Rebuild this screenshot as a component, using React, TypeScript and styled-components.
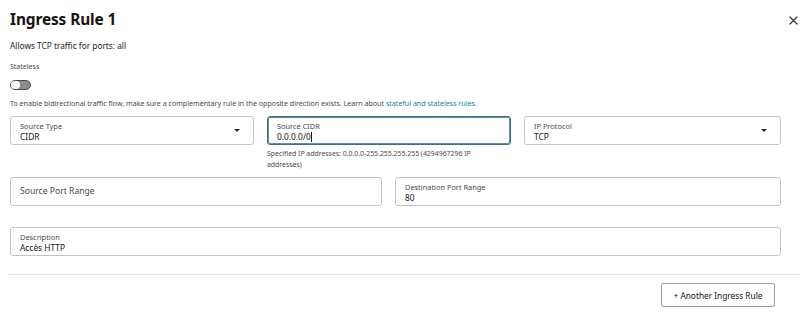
import React from "react";
import styled, { createGlobalStyle } from "styled-components";

const GlobalStyle = createGlobalStyle`
  html, body {
    margin: 0;
    padding: 0;
    background: #ffffff;
    overflow: hidden;
  }
  body {
    font-family: "Noto Sans", "Open Sans", Arial, sans-serif;
    color: #161513;
  }
`;

const Panel = styled.div`
  width: 800px;
  height: 318px;
  box-sizing: border-box;
  display: flex;
  flex-direction: column;
`;

const Body = styled.div`
  padding: 0 19px 0 10px;
  display: flex;
  flex-direction: column;
`;

const Header = styled.div`
  display: flex;
  justify-content: space-between;
  align-items: center;
  height: 22px;
  margin-top: 9px;
`;

const Title = styled.h2`
  margin: 0;
  font-size: 15.4px;
  line-height: 22px;
  font-weight: 700;
  letter-spacing: -0.1px;
`;

const CloseButton = styled.button`
  border: none;
  background: none;
  padding: 0;
  width: 10px;
  height: 10px;
  margin-right: -17px;
  display: flex;
  align-items: center;
  justify-content: center;
  cursor: pointer;
`;

const Summary = styled.p`
  margin: 9px 0 0;
  font-size: 8.3px;
  line-height: 12px;
  color: #252525;
`;

const SmallLabel = styled.div`
  margin-top: 10px;
  font-size: 7px;
  line-height: 10px;
  color: #4a4a4a;
`;

const Toggle = styled.div<{ $on?: boolean }>`
  margin-top: 8px;
  width: 19px;
  height: 8px;
  border: 1px solid #4b4b4b;
  border-radius: 5px;
  background: ${(p) => (p.$on ? "#227e9e" : "#8c8c8c")};
  position: relative;
  &::after {
    content: "";
    position: absolute;
    top: 0;
    left: ${(p) => (p.$on ? "10px" : "0")};
    width: 9px;
    height: 8px;
    border-radius: 4px;
    background: #ffffff;
  }
`;

const Hint = styled.p`
  margin: 8px 0 0;
  font-size: 7.1px;
  line-height: 11px;
  color: #4a4a4a;
`;

const Link = styled.a`
  color: #227e9e;
  text-decoration: none;
`;

const Grid = styled.div<{ $cols: string; $top: number }>`
  display: grid;
  grid-template-columns: ${(p) => p.$cols};
  column-gap: 13px;
  margin-top: ${(p) => p.$top}px;
  align-items: start;
`;

const FieldWrap = styled.div`
  display: flex;
  flex-direction: column;
`;

const Field = styled.div<{ $focused?: boolean }>`
  position: relative;
  height: 29px;
  box-sizing: border-box;
  border: 1px solid ${(p) => (p.$focused ? "#3e6f84" : "#c4c4c4")};
  box-shadow: ${(p) => (p.$focused ? "inset 0 0 0 1px #5f8fa3" : "none")};
  border-radius: 3px;
  padding: 4px 9px 0;
  display: flex;
  flex-direction: column;
`;

const FieldLabel = styled.span`
  font-size: 7.4px;
  line-height: 10px;
  color: #4a4a4a;
`;

const FieldValue = styled.span`
  font-size: 8.4px;
  line-height: 11px;
  color: #161513;
  display: flex;
  align-items: center;
`;

const Placeholder = styled.span`
  font-size: 8.6px;
  line-height: 27px;
  margin-top: -4px;
  color: #4a4a4a;
`;

const Cursor = styled.span`
  display: inline-block;
  width: 1px;
  height: 10px;
  background: #161513;
`;

const Caret = styled.span`
  position: absolute;
  right: 13px;
  top: 12px;
  width: 0;
  height: 0;
  border-left: 3px solid transparent;
  border-right: 3px solid transparent;
  border-top: 3px solid #2b2b2b;
`;

const FieldHelp = styled.p`
  margin: 3px 0 0;
  font-size: 6.9px;
  line-height: 11px;
  color: #4a4a4a;
`;

const Divider = styled.hr`
  margin: 18px 0 0 8px;
  border: none;
  border-top: 1px solid #e2e2e2;
  width: 792px;
`;

const Footer = styled.div`
  display: flex;
  justify-content: flex-end;
  padding-right: 25px;
  margin-top: 8px;
`;

const SecondaryButton = styled.button`
  height: 24px;
  width: 114px;
  box-sizing: border-box;
  border: 1px solid #9e9e9e;
  border-radius: 2px;
  background: #ffffff;
  font-family: "Noto Sans", "Open Sans", Arial, sans-serif;
  font-size: 8.3px;
  color: #161513;
  padding: 0;
  cursor: pointer;
`;

const CloseIcon = () => (
  <svg width="9" height="9" viewBox="0 0 9 9">
    <path d="M1 1 L8 8 M8 1 L1 8" stroke="#3a3a3a" strokeWidth="1.3" strokeLinecap="round" />
  </svg>
);

export default function App() {
  return (
    <Panel>
      <GlobalStyle />
      <Body>
        <Header>
          <Title>Ingress Rule 1</Title>
          <CloseButton aria-label="Close">
            <CloseIcon />
          </CloseButton>
        </Header>
        <Summary>Allows TCP traffic for ports: all</Summary>
        <SmallLabel>Stateless</SmallLabel>
        <Toggle />
        <Hint>
          To enable bidirectional traffic flow, make sure a complementary rule in the opposite direction exists. Learn
          about <Link href="#">stateful and stateless rules.</Link>
        </Hint>

        <Grid $cols="244px 244px 1fr" $top={7}>
          <FieldWrap>
            <Field>
              <FieldLabel>Source Type</FieldLabel>
              <FieldValue>CIDR</FieldValue>
              <Caret />
            </Field>
          </FieldWrap>
          <FieldWrap>
            <Field $focused>
              <FieldLabel>Source CIDR</FieldLabel>
              <FieldValue>
                0.0.0.0/0
                <Cursor />
              </FieldValue>
            </Field>
            <FieldHelp>
              Specified IP addresses: 0.0.0.0-255.255.255.255 (4294967296 IP
              <br />
              addresses)
            </FieldHelp>
          </FieldWrap>
          <FieldWrap>
            <Field>
              <FieldLabel>IP Protocol</FieldLabel>
              <FieldValue>TCP</FieldValue>
              <Caret />
            </Field>
          </FieldWrap>
        </Grid>

        <Grid $cols="372px 1fr" $top={7}>
          <Field>
            <Placeholder>Source Port Range</Placeholder>
          </Field>
          <Field>
            <FieldLabel>Destination Port Range</FieldLabel>
            <FieldValue>80</FieldValue>
          </Field>
        </Grid>

        <Grid $cols="1fr" $top={21}>
          <Field>
            <FieldLabel>Description</FieldLabel>
            <FieldValue>Accès HTTP</FieldValue>
          </Field>
        </Grid>
      </Body>
      <Divider />
      <Footer>
        <SecondaryButton>+ Another Ingress Rule</SecondaryButton>
      </Footer>
    </Panel>
  );
}
